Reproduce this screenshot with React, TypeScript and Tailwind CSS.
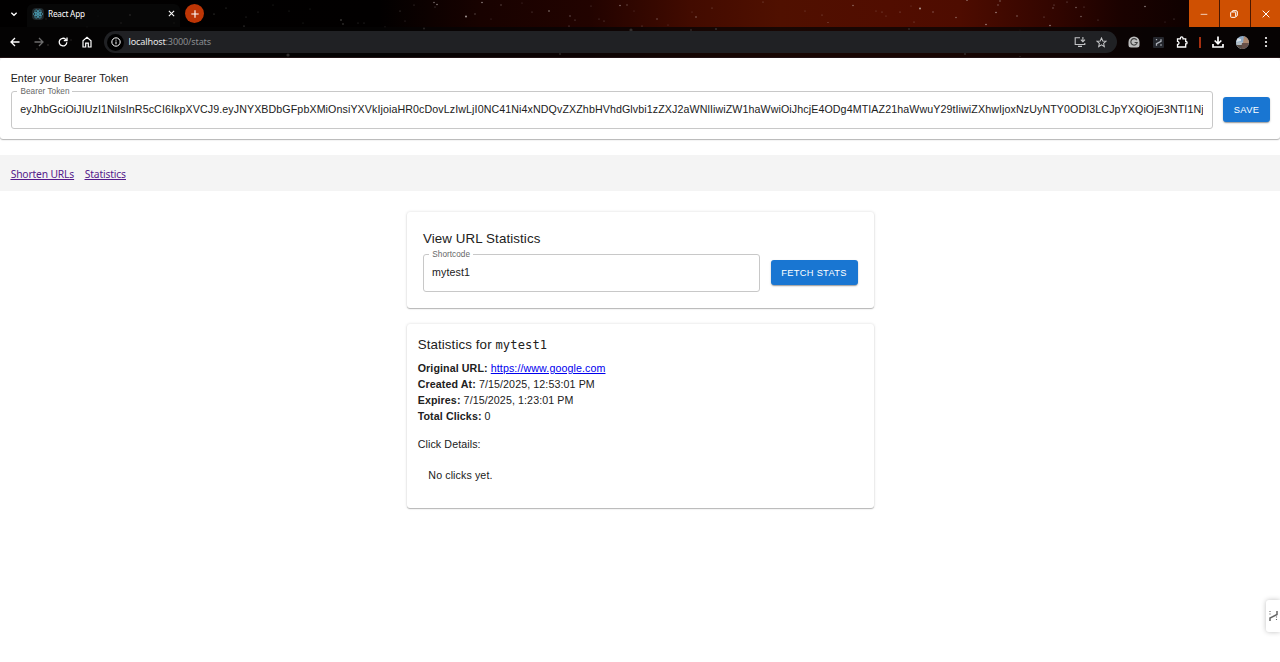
import type { ReactNode } from "react";

const TOKEN =
  "eyJhbGciOiJIUzI1NiIsInR5cCI6IkpXVCJ9.eyJNYXBDbGFpbXMiOnsiYXVkIjoiaHR0cDovLzIwLjI0NC41Ni4xNDQvZXZhbHVhdGlvbi1zZXJ2aWNlIiwiZW1haWwiOiJhcjE4ODg4MTIAZ21haWwuY29tIiwiZXhwIjoxNzUyNTY0ODI3LCJpYXQiOjE3NTI1Nj";

// x, y, radius, opacity
const STARS: number[][] = [
  [130, 15, 1, 0.6], [121, 23, 1, 0.35], [98, 16, 0.6, 0.3], [46, 19, 1, 0.4], [174, 16, 0.7, 0.5], [174, 23, 0.7, 0.4],
  [214, 14, 0.6, 0.5], [226, 8, 0.6, 0.4], [244, 26, 0.6, 0.6], [246, 17, 0.5, 0.4], [258, 12, 0.5, 0.4], [273, 5, 0.5, 0.3], [289, 11, 0.5, 0.3], [303, 23, 0.5, 0.3], [310, 9, 0.5, 0.3],
  [288, 55, 1.6, 1], [87, 27, 0.8, 0.25], [48, 45, 0.9, 0.8], [37, 49, 0.9, 0.8], [71, 40, 0.8, 0.8],
  [341, 20, 0.8, 0.5], [343, 24, 0.8, 0.4], [358, 23, 0.5, 0.4], [364, 23, 0.5, 0.4], [385, 27, 0.6, 0.4], [400, 11, 0.6, 0.5], [405, 21, 0.5, 0.4], [414, 5, 0.6, 0.4],
  [434, 2.5, 0.7, 0.8], [437, 4.5, 0.7, 0.9], [435, 7, 0.5, 0.6], [466, 16.5, 1, 0.9], [475, 14, 0.7, 0.5], [482, 2.5, 0.8, 0.8], [501, 5, 0.7, 0.5], [491, 19, 0.5, 0.4], [522, 3, 0.5, 0.4], [532, 12, 0.6, 0.5], [549, 11, 0.8, 0.8],
  [570, 16, 0.7, 0.6], [575, 20, 0.6, 0.6], [569, 26, 0.6, 0.6], [591, 6, 0.6, 0.4], [599, 19, 0.5, 0.5], [604, 21, 0.6, 0.5], [620, 5.5, 0.7, 0.8], [627, 5, 0.7, 0.5], [634, 11, 0.5, 0.4], [642, 26, 0.6, 0.5], [657, 19, 0.7, 0.6], [668, 25, 0.5, 0.4], [692, 12, 0.5, 0.4], [696, 17, 0.8, 0.6], [712, 8, 0.6, 0.5],
  [631, 30, 1.6, 1], [716, 29, 1.1, 1], [691, 30, 0.9, 0.9], [424, 28.5, 1, 0.8], [560, 54, 1, 0.8], [909, 29, 1, 0.8],
  [763, 2, 0.6, 0.5], [805, 11, 0.6, 0.4], [822, 15, 0.6, 0.5], [828, 22.5, 0.6, 0.5], [853, 5.5, 0.8, 0.6], [882, 12, 0.6, 0.5], [876, 11, 0.6, 0.4], [886, 16, 0.6, 0.4], [900, 12, 0.6, 0.6], [911, 6, 0.5, 0.4], [920, 8.5, 1, 0.9], [914, 22, 0.6, 0.5], [933, 12, 0.7, 0.6], [956, 17.5, 0.7, 0.7], [967, 0.5, 0.6, 0.8], [986, 24.5, 0.8, 0.8], [996, 12.5, 0.8, 0.8], [998, 5, 0.7, 0.6], [1000, 1, 0.7, 0.7], [1017, 16, 0.7, 0.7], [1044, 17, 0.6, 0.6], [1053, 8, 0.7, 0.6], [1054, 5, 0.6, 0.6], [1050, 25.5, 0.8, 0.8],
  [1067, 2, 0.6, 0.6], [1076, 7.5, 0.7, 0.7], [1081, 16.5, 0.7, 0.7], [1084, 7, 0.6, 0.5], [1098, 20, 0.6, 0.5], [1145, 6.5, 0.8, 0.8], [1174, 19, 0.6, 0.5], [1165, 22, 0.5, 0.4], [965, 54, 1.1, 0.9], [1020, 57, 0.9, 0.8], [1020, 30, 0.6, 0.5],
];

function Starfield() {
  return (
    <svg className="absolute inset-0 size-full" viewBox="0 0 1280 58" aria-hidden="true">
      {STARS.map(([x, y, r, o], i) => (
        <circle key={i} cx={x} cy={y} r={r} fill="#d8cfca" opacity={o * 0.8} />
      ))}
    </svg>
  );
}

function ReactLogo() {
  return (
    <svg width="12" height="12" viewBox="0 0 24 24" fill="none" stroke="#4da1b8" strokeWidth="1.5" className="shrink-0 rounded-sm bg-[#20282c]">
      <ellipse cx="12" cy="12" rx="9.5" ry="3.8" />
      <ellipse cx="12" cy="12" rx="9.5" ry="3.8" transform="rotate(60 12 12)" />
      <ellipse cx="12" cy="12" rx="9.5" ry="3.8" transform="rotate(120 12 12)" />
      <circle cx="12" cy="12" r="1.8" fill="#4da1b8" />
    </svg>
  );
}

function Glyph({ size = 12, w = 1.3, className = "", children }: { size?: number; w?: number; className?: string; children: ReactNode }) {
  return (
    <svg width={size} height={size} viewBox="0 0 12 12" fill="none" stroke="currentColor" strokeWidth={w} className={"shrink-0 " + className}>
      {children}
    </svg>
  );
}

function TabStrip() {
  return (
    <div className="relative flex h-[27px] items-stretch">
      <div className="flex w-[27px] items-center justify-center">
        <Glyph size={8} w={2}><path d="M2 4.2 6 8l4-3.8" /></Glyph>
      </div>
      <div className="mt-1 flex w-[153px] items-center rounded-t-md bg-[#090909]/75 pr-[5.5px] pb-1 pl-[5px]">
        <ReactLogo />
        <span className="ml-[4px] flex-1 pt-px font-['Noto_Sans',sans-serif] text-[8.2px] leading-3 tracking-[-0.2px]">React App</span>
        <Glyph size={7} w={1.8}><path d="m1.5 1.5 9 9m0-9-9 9" /></Glyph>
      </div>
      <div className="ml-[5px] flex size-[19px] translate-y-1 items-center justify-center rounded-full bg-[#bd3505]">
        <Glyph size={8} w={1.7}><path d="M6 .5v11M.5 6h11" /></Glyph>
      </div>
      <div className="ml-auto flex gap-px bg-[#4a1700]">
        <div className="flex w-[30px] items-center justify-center bg-[#cf5002]">
          <Glyph size={8} w={1.1}><path d="M1 6.5h10" /></Glyph>
        </div>
        <div className="flex w-[30px] items-center justify-center bg-[#cf5002]">
          <Glyph size={8} w={1.5} className="-ml-[2px]">
            <rect x="1" y="3" width="7.5" height="8" rx="1" />
            <path d="M3.5 3V1.8q0-.8.8-.8H9q2 0 2 2v5q0 1.5-2 1.5" />
          </Glyph>
        </div>
        <div className="flex w-[29px] items-center justify-center bg-[#cf5002]">
          <Glyph size={8} w={1.5}><path d="m1 1 10 10M11 1 1 11" /></Glyph>
        </div>
      </div>
    </div>
  );
}

function Toolbar() {
  return (
    <div className="relative flex h-[31px] items-center border-b border-[#211315] bg-[#050404]/75 pl-[9px] pr-[8px]">
      <Glyph><path d="M10.5 6H2.2M6 2 2 6l4 4" /></Glyph>
      <Glyph className="ml-3 text-[#6d6d6d]"><path d="M1.5 6h8.3M6 2l4 4-4 4" /></Glyph>
      <Glyph className="ml-3">
        <path d="M9.8 6.2A3.8 3.8 0 1 1 8.7 3.4L10 4.5" />
        <path d="M10 1.5v3.2H6.8" />
      </Glyph>
      <svg width="10" height="12" viewBox="0 0 10 12" fill="none" stroke="currentColor" strokeWidth="1.2" className="ml-[13px] shrink-0">
        <path d="M1 11V4.7L5 1.4l4 3.3V11H6.3V7.2H3.7V11Z" />
      </svg>
      <div className="ml-[12px] flex h-[22px] w-[1013px] shrink-0 items-center rounded-full bg-[#202124] pr-[10.5px] pl-[3px]">
        <div className="flex size-[17px] items-center justify-center rounded-full bg-black">
          <Glyph size={10} w={1.2}>
            <circle cx="6" cy="6" r="5" />
            <path d="M6 5.4v3.3M6 3.2v1.2" />
          </Glyph>
        </div>
        <div className="ml-[4.5px] flex-1 font-['Noto_Sans',sans-serif] text-[9.1px] leading-4 tracking-[-0.15px] text-[#8b8d90]">
          <span className="text-[#e8e9ea]">localhost</span>:3000/stats
        </div>
        <Glyph size={12} w={1.1} className="text-[#c3c4c6]">
          <path d="M6 1.7H1.2v6.8h9.6V7M4 10.4h4M8.9 1v4.5M6.8 3.7l2.1 2.1L11 3.7" />
        </Glyph>
        <Glyph size={11} w={1.1} className="ml-[10px] text-[#c3c4c6]">
          <path d="m6 1 1.4 3.3 3.6.3-2.7 2.4.8 3.5L6 8.6l-3.1 1.9.8-3.5L1 4.6l3.6-.3Z" />
        </Glyph>
      </div>
      <svg width="12" height="12" viewBox="0 0 12 12" fill="none" className="ml-[11px] shrink-0">
        <path d="M6 .5a5.5 5.5 0 0 1 5.5 5.5v3A2.5 2.5 0 0 1 9 11.5H3A2.5 2.5 0 0 1 .5 9V6A5.5 5.5 0 0 1 6 .5" fill="#bdbdbd" />
        <path d="M8.7 4.1A3.2 3.2 0 1 0 9.2 6.5H6.6" stroke="#404040" strokeWidth="1.2" />
      </svg>
      <svg width="11" height="11" viewBox="0 0 11 11" fill="none" className="ml-[12.5px] shrink-0">
        <rect width="11" height="11" rx="1" fill="#24262c" />
        <path d="M3.5 2v1.3M3.5 8.8V6.7L8 4.4V2.2M8 7.3v1.5" stroke="#aeb2ba" strokeWidth="1.3" />
      </svg>
      <Glyph size={12} w={1.3} className="ml-[12.5px]">
        <path d="M1.5 2.8h2.9v-.6a1.3 1.3 0 0 1 2.6 0v.6h2.7v2.7h.2a1.2 1.2 0 0 1 0 2.4h-.2V11H1.5V8.4a1.5 1.5 0 0 0 0-3Z" />
      </Glyph>
      <div className="ml-[11px] h-[11px] w-[1.5px] bg-[#a52f10]" />
      <Glyph size={12} w={1.7} className="ml-[11.5px]">
        <path d="M6 .5v7M2.7 4.5 6 7.8l3.3-3.3M1 8v3h10V8" />
      </Glyph>
      <svg width="13" height="13" viewBox="0 0 13 13" className="ml-[11.5px] shrink-0">
        <clipPath id="avatar"><circle cx="6.5" cy="6.5" r="6.5" /></clipPath>
        <g clipPath="url(#avatar)">
          <rect width="13" height="13" fill="#8eabc7" />
          <path d="M8 0h5v7H7z" fill="#ad8970" />
          <path d="M0 6.5 6 6l2 2-2 5H0z" fill="#b4bec5" />
          <path d="M6 7h7v6H5z" fill="#675049" />
          <path d="m1 2 4 1v2L0 6z" fill="#d8e0e6" />
          <path d="M0 9h6v4H1z" fill="#574a43" />
        </g>
      </svg>
      <svg width="4" height="12" viewBox="0 0 4 12" fill="currentColor" className="ml-auto mr-[4px] shrink-0">
        <circle cx="2" cy="2" r="1.1" /><circle cx="2" cy="6" r="1.1" /><circle cx="2" cy="10" r="1.1" />
      </svg>
    </div>
  );
}

function OutlinedField({ label, value, labelWidth }: { label: string; value: string; labelWidth: string }) {
  return (
    <div className="relative flex h-[38px] min-w-0 flex-1 items-center rounded-[3px] border border-[#c8c8c8] px-[8.5px]">
      <span className={"absolute -top-[6px] left-[5.5px] bg-white pl-[3.3px] text-[8.2px] leading-[11px] tracking-[0.04px] whitespace-nowrap text-[#666] " + labelWidth}>{label}</span>
      <div className="w-full overflow-hidden text-[10.667px] leading-[15.3px] tracking-[0.1px] whitespace-nowrap">{value}</div>
    </div>
  );
}

function Button({ width, children }: { width: string; children: ReactNode }) {
  return (
    <button className={"-mt-px h-[25px] shrink-0 rounded-[3px] bg-[#1976d2] text-center text-[9.333px] tracking-[0.267px] whitespace-nowrap text-white shadow-[0_2px_1px_-1px_#0003,0_1px_2px_#00000040] " + width}>
      {children}
    </button>
  );
}

const CARD = "rounded-[3px] bg-white shadow-[0_1px_1px_#00000040,0_0_3px_#00000026]";

export default function App() {
  return (
    <div className="relative flex h-[662px] w-full flex-col overflow-hidden bg-white font-['Liberation_Sans',Arial,sans-serif] text-[10.667px] leading-4 text-[#212121]">
      <header className="relative h-[58px] shrink-0 bg-[linear-gradient(90deg,#010000_0px,#020000_380px,#180200_480px,#220300_590px,#420b00_690px,#501000_780px,#510d00_890px,#4e0c00_960px,#300500_1060px,#1b0200_1120px,#100100_1185px,#080000_1280px)] text-white">
        <Starfield />
        <TabStrip />
        <Toolbar />
      </header>

      <section className="h-[81px] shrink-0 rounded-[3px] pr-[10px] pl-[10.67px] pt-[11.5px] shadow-[0_1px_1px_#00000040,0_0_3px_#00000026]">
        <p className="tracking-[0.1px]">Enter your Bearer Token</p>
        <div className="mt-[5.5px] flex items-center gap-[10.5px]">
          <OutlinedField label="Bearer Token" value={TOKEN} labelWidth="w-[55px]" />
          <Button width="w-[47px]">SAVE</Button>
        </div>
      </section>

      <nav className="mt-4 flex h-9 shrink-0 items-center gap-[10.67px] bg-[#f4f4f4] px-[10.67px] pt-[1px] font-['Noto_Sans',sans-serif] text-[10.3px] tracking-[-0.16px] text-[#551a8b] underline">
        <a href="#shorten">Shorten URLs</a>
        <a href="#statistics">Statistics</a>
      </nav>

      <main className="mt-[20.5px] flex w-[467px] flex-col gap-4 self-center">
        <section className={"h-[96px] px-4 pt-[16.5px] " + CARD}>
          <h1 className="pl-[0.5px] text-[13.333px] leading-[21px] tracking-[0.1px]">View URL Statistics</h1>
          <div className="mt-[5px] flex items-center gap-[10.5px]">
            <OutlinedField label="Shortcode" value="mytest1" labelWidth="w-[44px]" />
            <Button width="w-[87px]">FETCH STATS</Button>
          </div>
        </section>

        <section className={"h-[184px] pr-[10.67px] pl-[11.2px] pt-[10.5px] tracking-[0.1px] " + CARD}>
          <h2 className="mb-[5px] h-[21px] text-[13.333px] leading-[21px]">
            Statistics for <code className="font-['DejaVu_Sans_Mono',monospace] text-[12.1px]">mytest1</code>
          </h2>
          <p><strong>Original URL:</strong> <a href="#original" className="text-[#0000ee] underline">https://www.google.com</a></p>
          <p><strong>Created At:</strong> 7/15/2025, 12:53:01 PM</p>
          <p><strong>Expires:</strong> 7/15/2025, 1:23:01 PM</p>
          <p><strong>Total Clicks:</strong> 0</p>
          <h3 className="mt-[10.67px] leading-[18.67px]">Click Details:</h3>
          <p className="mt-[13.5px] pl-[10.67px]">No clicks yet.</p>
        </section>
      </main>

      <div className="absolute top-[600px] right-0 flex h-8 w-[14px] items-center rounded-l-[3px] bg-white pl-[2px] shadow-[0_0_5px_#00000040]">
        <svg width="11" height="12" viewBox="0 0 11 12" fill="none" stroke="#666">
          <path d="M2 11V8l7-3.5V1" strokeWidth="1.5" />
          <path d="M2 1v4M8.5 6.5V11" strokeDasharray="1 1.4" strokeWidth="1.1" />
        </svg>
      </div>
    </div>
  );
}
